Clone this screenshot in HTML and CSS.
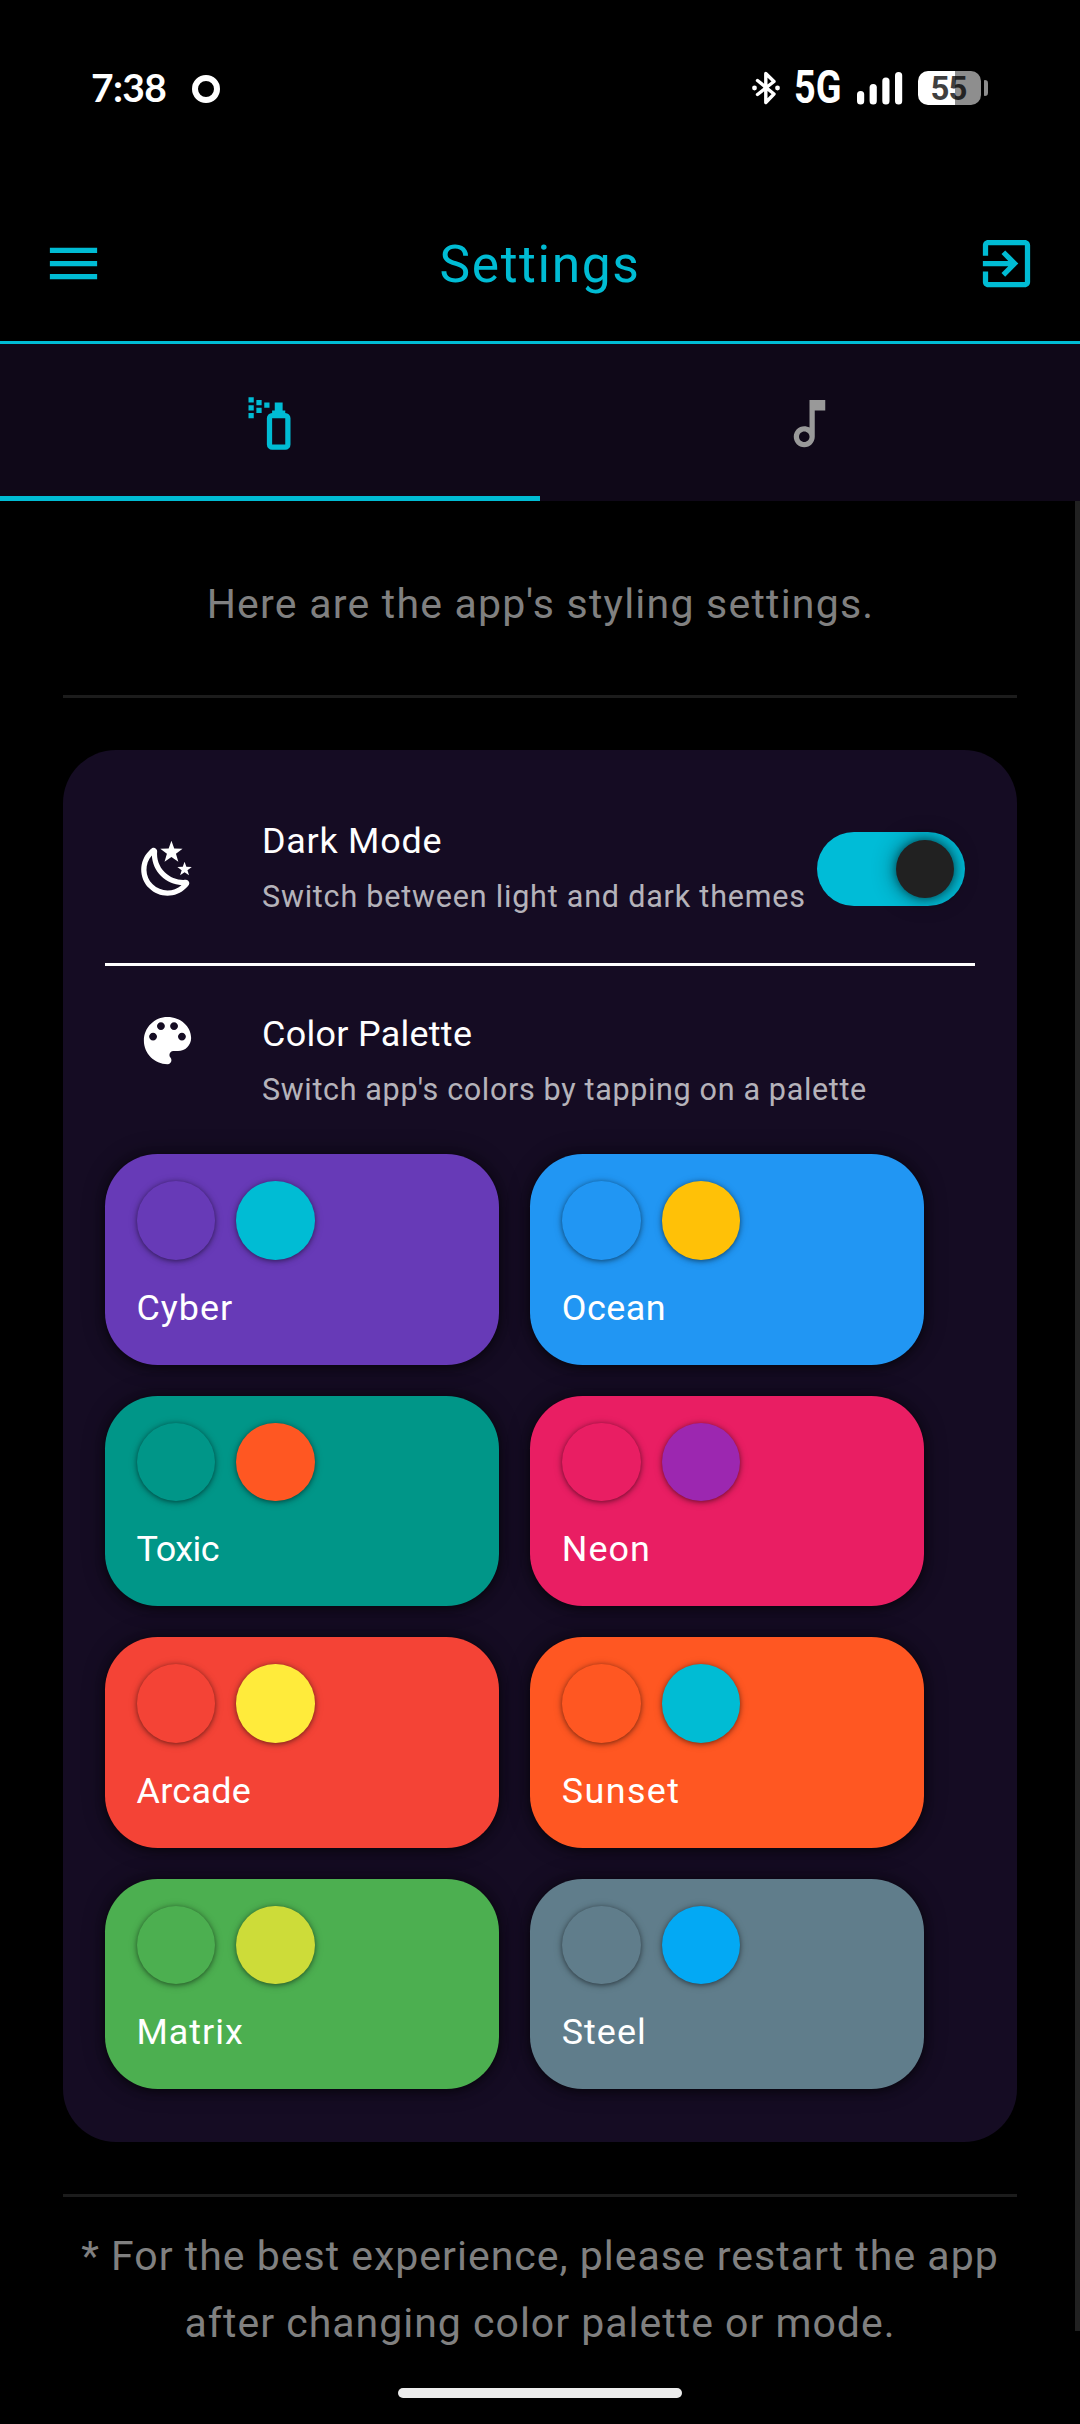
FILE: index.html
```html
<!DOCTYPE html>
<html lang="en">
<head>
<meta charset="utf-8">
<title>Settings</title>
<link rel="stylesheet" href="styles.css">
</head>
<body>
<div class="screen">
  <div class="status">
    <span class="status-time">7:38</span>
    <span class="status-ring"></span>
    <span class="status-spacer"></span>
    <svg class="status-bt" viewBox="0 0 28 34" fill="none" stroke="#fff" stroke-width="3.4" stroke-linecap="round" stroke-linejoin="round"><path d="M5.500 9.500 L22 23 L13.800 31.500 V2.500 L22 10.500 L5.500 23.500"/><circle cx="2.500" cy="17" r="2.400" fill="#fff" stroke="none"/><circle cx="25.500" cy="17" r="2.400" fill="#fff" stroke="none"/></svg>
    <span class="status-net">5G</span>
    <svg class="status-signal" viewBox="0 0 46 33" fill="#fff"><rect x="0" y="19" width="7.200" height="13.500" rx="3.500"/><rect x="12.600" y="12" width="7.200" height="20.500" rx="3.500"/><rect x="25.300" y="5.500" width="7.200" height="27" rx="3.500"/><rect x="38" y="0" width="7.200" height="32.500" rx="3.500"/></svg>
    <span class="battery"><span class="battery-level">55</span></span>
    <span class="battery-nub"></span>
  </div>

  <header class="appbar">
    <svg class="icon" viewBox="0 0 24 24"><path d="M3 18h18v-2H3v2zm0-5h18v-2H3v2zm0-7v2h18V6H3z"/></svg>
    <h1 class="title">Settings</h1>
    <svg class="icon" viewBox="0 0 24 24"><path d="M19 3H5c-1.110 0-2 .9-2 2v4h2V5h14v14H5v-4H3v4c0 1.100.89 2 2 2h14c1.100 0 2-.9 2-2V5c0-1.100-.9-2-2-2zM10.090 15.590L11.500 17l5-5-5-5-1.410 1.410L12.670 11H3v2h9.670l-2.580 2.590z"/></svg>
  </header>

  <nav class="tabs">
    <div class="tab tab--active"><svg class="icon" viewBox="0 0 24 24"><path d="M10,4H12V6H10V4M7,3H9V5H7V3M7,6H9V8H7V6M6,8V10H4V8H6M6,5V7H4V5H6M6,2V4H4V2H6M13,22A2,2 0 0,1 11,20V10A2,2 0 0,1 13,8V7H14V4H17V7H18V8A2,2 0 0,1 20,10V20A2,2 0 0,1 18,22H13M13,10V20H18V10H13Z"/></svg></div>
    <div class="tab"><svg class="icon" viewBox="0 0 24 24"><path d="M12 3l.01 10.550c-.59-.34-1.270-.55-2-.55C7.790 13 6 14.790 6 17s1.790 4 4.010 4S14 19.210 14 17V7h4V3h-6zm-1.990 16c-1.100 0-2-.9-2-2s.9-2 2-2 2 .9 2 2-.9 2-2 2z"/></svg></div>
  </nav>

  <main class="content">
    <p class="intro">Here are the app's styling settings.</p>
    <div class="rule"></div>

    <section class="card">
      <div class="row">
        <svg class="icon" viewBox="0 0 24 24"><path d="M17.750,4.090L15.220,6.030L16.130,9.090L13.500,7.280L10.870,9.090L11.780,6.030L9.250,4.090L12.440,4L13.500,1L14.560,4L17.750,4.090M21.250,11L19.610,12.250L20.200,14.230L18.500,13.060L16.800,14.230L17.390,12.250L15.750,11L17.810,10.950L18.500,9L19.190,10.950L21.250,11M18.970,15.950C19.800,15.870 20.690,17.050 20.160,17.800C19.840,18.250 19.500,18.670 19.080,19.070C15.170,23 8.840,23 4.940,19.070C1.030,15.170 1.030,8.830 4.940,4.930C5.340,4.530 5.760,4.170 6.210,3.850C6.960,3.320 8.140,4.210 8.060,5.040C7.790,7.900 8.750,10.870 10.950,13.060C13.140,15.260 16.100,16.220 18.970,15.950M17.330,17.970C14.500,17.810 11.700,16.640 9.530,14.500C7.360,12.310 6.200,9.500 6.040,6.680C3.230,9.820 3.340,14.640 6.350,17.660C9.370,20.670 14.190,20.780 17.330,17.970Z"/></svg>
        <div class="row-text">
          <div class="row-title">Dark Mode</div>
          <div class="row-sub">Switch between light and dark themes</div>
        </div>
        <div class="toggle"><div class="toggle-thumb"></div></div>
      </div>
      <div class="row row--palette">
        <svg class="icon" viewBox="0 0 24 24"><path d="M12 3c-4.970 0-9 4.030-9 9s4.030 9 9 9c.83 0 1.500-.67 1.500-1.500 0-.39-.15-.74-.39-1.010-.23-.26-.38-.61-.38-.99 0-.83.67-1.500 1.500-1.500H16c2.760 0 5-2.240 5-5 0-4.420-4.030-8-9-8zm-5.500 9c-.83 0-1.500-.67-1.500-1.500S5.670 9 6.500 9 8 9.670 8 10.500 7.330 12 6.500 12zm3-4C8.670 8 8 7.330 8 6.500S8.670 5 9.500 5s1.500.67 1.500 1.500S10.330 8 9.500 8zm5 0c-.83 0-1.500-.67-1.500-1.500S13.670 5 14.500 5s1.500.67 1.500 1.500S15.330 8 14.500 8zm3 4c-.83 0-1.500-.67-1.500-1.500S16.670 9 17.500 9s1.500.67 1.500 1.500-.67 1.500-1.500 1.500z"/></svg>
        <div class="row-text">
          <div class="row-title">Color Palette</div>
          <div class="row-sub">Switch app's colors by tapping on a palette</div>
        </div>
      </div>
      <div class="palettes">
        <div class="palette palette--cyber"><div class="dots"><i class="dot"></i><i class="dot dot--accent"></i></div><div class="palette-name">Cyber</div></div>
        <div class="palette palette--ocean"><div class="dots"><i class="dot"></i><i class="dot dot--accent"></i></div><div class="palette-name">Ocean</div></div>
        <div class="palette palette--toxic"><div class="dots"><i class="dot"></i><i class="dot dot--accent"></i></div><div class="palette-name">Toxic</div></div>
        <div class="palette palette--neon"><div class="dots"><i class="dot"></i><i class="dot dot--accent"></i></div><div class="palette-name">Neon</div></div>
        <div class="palette palette--arcade"><div class="dots"><i class="dot"></i><i class="dot dot--accent"></i></div><div class="palette-name">Arcade</div></div>
        <div class="palette palette--sunset"><div class="dots"><i class="dot"></i><i class="dot dot--accent"></i></div><div class="palette-name">Sunset</div></div>
        <div class="palette palette--matrix"><div class="dots"><i class="dot"></i><i class="dot dot--accent"></i></div><div class="palette-name">Matrix</div></div>
        <div class="palette palette--steel"><div class="dots"><i class="dot"></i><i class="dot dot--accent"></i></div><div class="palette-name">Steel</div></div>
      </div>
    </section>

    <div class="rule"></div>
    <p class="note">* For the best experience, please restart the app<br>after changing color palette or mode.</p>
    <div class="scrollbar"></div>
  </main>
  <div class="home-bar"></div>
</div>
</body>
</html>
```
FILE: styles.css
```css
* { box-sizing: border-box; }
body { margin: 0; background: #000; }

.screen {
  position: relative;
  width: 1080px;
  height: 2424px;
  overflow: hidden;
  display: flex;
  flex-direction: column;
  background: #000;
  color: #fff;
  font-family: Roboto, "Noto Sans", sans-serif;
}
.icon { width: 63px; height: 63px; fill: currentColor; flex: none; }

/* status bar */
.status {
  height: 186px;
  padding: 0 92px 10px 91px;
  display: flex;
  align-items: center;
}
.status-time {
  width: 101px;
  font: 700 39px/40px Lato, sans-serif;
  letter-spacing: -0.7px;
  margin-top: -3px;
}
.status-ring { width: 28px; height: 28px; border: 6px solid #fff; border-radius: 50%; margin-top: 1px; }
.status-spacer { flex: 1; }
.status-bt { width: 28px; height: 34px; margin-right: 14px; }
.status-net {
  width: 48px;
  font-size: 45.500px;
  font-weight: 700;
  line-height: 46px;
  transform: scaleX(0.83);
  transform-origin: left;
}
.status-signal { width: 46px; height: 33px; margin-left: 15px; }
.battery {
  width: 63px;
  height: 34px;
  margin-left: 15px;
  padding: 1px 2px 0 0;
  border-radius: 10px;
  background: linear-gradient(90deg, #fff 37px, #8e8e8e 37px);
  display: flex;
  align-items: center;
  justify-content: center;
}
.battery-level { font-size: 33px; font-weight: 700; line-height: 34px; letter-spacing: -1px; color: rgba(0, 0, 0, 0.75); }
.battery-nub { width: 4px; height: 16px; margin-left: 3px; border-radius: 1px 4px 4px 1px; background: #8e8e8e; }

/* app bar and tabs */
.appbar {
  height: 158px;
  padding: 0 42px;
  display: flex;
  align-items: center;
  justify-content: space-between;
  border-bottom: 3px solid #00bcd4;
  color: #00bcd4;
}
.title { margin: 2px 0 0; font-size: 51.500px; font-weight: 400; line-height: 60px; letter-spacing: 1.600px; }
.tabs { height: 157px; display: flex; background: #0f0818; }
.tab {
  flex: 1;
  display: flex;
  align-items: center;
  justify-content: center;
  padding: 7px 2px 0 0;
  border-bottom: 5px solid transparent;
  color: #999;
}
.tab--active { color: #00bcd4; border-color: #00bcd4; }

/* content */
.content { position: relative; flex: 1; padding: 0 63px; }
.intro {
  margin: 0;
  height: 194px;
  padding-top: 73px;
  text-align: center;
  font-size: 41px;
  line-height: 60px;
  letter-spacing: 1.220px;
  text-indent: 1px;
  color: #808080;
}
.rule { height: 3px; background: #1c1c1c; }
.card {
  margin: 52px 0;
  height: 1392px;
  padding: 42px;
  border-radius: 53px;
  background: #150c23;
}
.row {
  display: flex;
  align-items: center;
  height: 174px;
  padding: 21px 10px 38px 31px;
  border-bottom: 3px solid #fff;
}
.row-text { flex: 1; margin-left: 63px; white-space: nowrap; }
.row-title { font-size: 35.900px; line-height: 56px; letter-spacing: 0.750px; }
.row-sub { font-size: 30.500px; line-height: 56px; letter-spacing: 0.800px; color: rgba(255, 255, 255, 0.7); }
.row--palette { height: 188px; padding: 40px 10px 36px 31px; border: 0; align-items: flex-start; }
.row--palette .icon { margin-top: 3px; }
.row--palette .row-title { letter-spacing: 0.300px; }
.row--palette .row-sub { letter-spacing: 0.660px; }

.toggle {
  width: 148px;
  height: 74px;
  padding: 8px 11px;
  border-radius: 37px;
  display: flex;
  justify-content: flex-end;
  background: #00bcd7;
}
.toggle-thumb {
  width: 58px;
  height: 58px;
  border-radius: 50%;
  background: #212121;
  box-shadow: 0 0 10px rgba(0, 0, 0, 0.5), 0 0 24px rgba(0, 0, 0, 0.45);
}

.palettes {
  display: grid;
  grid-template-columns: 394px 394px;
  grid-auto-rows: 210.500px;
  gap: 31px 31.300px;
}
.palette {
  padding: 27px 31.500px;
  border-radius: 52.500px;
  background: var(--base);
  box-shadow: 0 2px 8px rgba(0, 0, 0, 0.5), 0 0 22px rgba(0, 0, 0, 0.4);
}
.dots { display: flex; gap: 21px; }
.dot {
  width: 78.750px;
  height: 78.750px;
  border-radius: 50%;
  background: var(--base);
  box-shadow: 0 1px 5px rgba(0, 0, 0, 0.45), 0 1px 10px rgba(0, 0, 0, 0.18);
}
.dot--accent { background: var(--accent); }
.palette-name { margin-top: 20px; font-size: 35.900px; line-height: 56px; letter-spacing: 1px; }
.palette--cyber { --base: #673ab7; --accent: #00bcd4; }
.palette--ocean { --base: #2196f3; --accent: #ffc107; }
.palette--ocean .palette-name { letter-spacing: 0.500px; }
.palette--toxic { --base: #009688; --accent: #ff5722; }
.palette--toxic .palette-name { letter-spacing: -0.500px; }
.palette--neon { --base: #e91e63; --accent: #9c27b0; }
.palette--arcade { --base: #f44336; --accent: #ffeb3b; }
.palette--arcade .palette-name { letter-spacing: 0.300px; }
.palette--sunset { --base: #ff5722; --accent: #00bcd4; }
.palette--sunset .palette-name { letter-spacing: 1.400px; }
.palette--matrix { --base: #4caf50; --accent: #cddc39; }
.palette--steel { --base: #607d8b; --accent: #03a9f4; }

.note {
  margin: 26px -20px 0;
  text-align: center;
  font-size: 41px;
  line-height: 66.500px;
  letter-spacing: 1px;
  color: #808080;
}
.scrollbar { position: absolute; top: 0; right: 0; width: 5px; height: 1830px; background: #212121; }
.home-bar {
  position: absolute;
  left: 398px;
  bottom: 26px;
  width: 284px;
  height: 10px;
  border-radius: 5px;
  background: #ececec;
}
```
